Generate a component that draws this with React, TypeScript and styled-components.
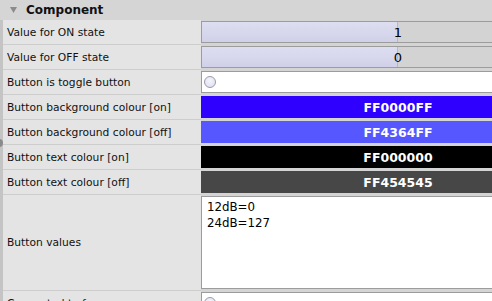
import React from "react";
import styled, { createGlobalStyle } from "styled-components";

const Global = createGlobalStyle`
  html, body { margin: 0; padding: 0; background: #d4d4d4; overflow: hidden; }
  * { box-sizing: border-box; }
`;

const Frame = styled.div`
  width: 492px;
  height: 301px;
  overflow: hidden;
  display: flex;
  flex-direction: column;
  background: #d4d4d4;
  font-family: "DejaVu Sans", "Liberation Sans", sans-serif;
`;

const Header = styled.div`
  height: 20px;
  flex: none;
  display: flex;
  align-items: center;
  gap: 9px;
  padding-left: 10px;
  background: #d5d5d5;
  font-weight: bold;
  font-size: 12px;
  color: #111;
`;

const Body = styled.div`
  display: flex;
  flex: 1;
  min-height: 0;
`;

const Strip = styled.div`
  width: 3px;
  flex: none;
  background: #c4c4c4;
  position: relative;
`;

const Grip = styled.div`
  position: absolute;
  left: -2px;
  top: 119px;
  width: 5px;
  height: 8px;
  border-radius: 0 4px 4px 0;
  background: #8a8a8a;
`;

const List = styled.div`
  display: flex;
  flex-direction: column;
  width: 592px;
  flex: none;
`;

const Row = styled.div<{ $h: number }>`
  display: grid;
  grid-template-columns: 198px 394px;
  height: ${(p) => p.$h}px;
  flex: none;
`;

const Label = styled.div`
  background: #e4e4e4;
  border-bottom: 1px solid #cdcdcd;
  display: flex;
  align-items: center;
  padding-left: 4px;
  font-size: 10.7px;
  color: #111;
  white-space: nowrap;
  overflow: hidden;
`;

const Cell = styled.div`
  background: #d4d4d4;
  padding: 1px 0 2px 0;
  display: flex;
  flex-direction: column;
`;

const SliderBox = styled.div`
  flex: 1;
  position: relative;
  border: 1px solid #9c9c9c;
  background: #d3d3d3;
  display: flex;
  align-items: center;
  justify-content: center;
  font-size: 13px;
  color: #000;
`;

const SliderFill = styled.div`
  position: absolute;
  left: 0;
  top: 0;
  bottom: 0;
  background: linear-gradient(#dedef2, #d0d0e8);
  border-right: 1px solid #b8b8cc;
`;

const SliderText = styled.span`
  position: relative;
`;

const ToggleBox = styled.div`
  flex: 1;
  border: 1px solid #9c9c9c;
  background: #fff;
  display: flex;
  align-items: center;
  padding-left: 2px;
`;

const Radio = styled.div`
  width: 12px;
  height: 12px;
  border-radius: 50%;
  border: 1px solid #9a9aa6;
  background: radial-gradient(circle at 50% 35%, #f4f4fc, #dcdcf0);
`;

const ColourBox = styled.div<{ $c: string }>`
  flex: 1;
  background: ${(p) => p.$c};
  display: flex;
  align-items: center;
  justify-content: center;
  color: #fff;
  font-weight: bold;
  font-size: 12.5px;
`;

const TextArea = styled.div`
  flex: 1;
  border: 1px solid #9c9c9c;
  background: #fff;
  padding: 2px 5px;
  font-size: 11.8px;
  line-height: 16px;
  color: #000;
  white-space: pre;
`;

const Triangle = () => (
  <svg width="7" height="6" viewBox="0 0 7 6">
    <path d="M0 0 L7 0 L3.5 6 Z" fill="#8c8c8c" />
  </svg>
);

const colours = [
  { label: "Button background colour [on]", c: "#3000ff", t: "FF0000FF" },
  { label: "Button background colour [off]", c: "#5757ff", t: "FF4364FF" },
  { label: "Button text colour [on]", c: "#000000", t: "FF000000" },
  { label: "Button text colour [off]", c: "#474747", t: "FF454545" },
];

export default function App() {
  return (
    <>
      <Global />
      <Frame>
        <Header>
          <Triangle />
          <span>Component</span>
        </Header>
        <Body>
          <Strip>
            <Grip />
          </Strip>
          <List>
            {[
              { label: "Value for ON state", v: "1" },
              { label: "Value for OFF state", v: "0" },
            ].map((r) => (
              <Row $h={25} key={r.label}>
                <Label>{r.label}</Label>
                <Cell>
                  <SliderBox>
                    <SliderFill style={{ width: "50%" }} />
                    <SliderText>{r.v}</SliderText>
                  </SliderBox>
                </Cell>
              </Row>
            ))}
            <Row $h={25}>
              <Label>Button is toggle button</Label>
              <Cell>
                <ToggleBox>
                  <Radio />
                </ToggleBox>
              </Cell>
            </Row>
            {colours.map((r) => (
              <Row $h={25} key={r.label}>
                <Label>{r.label}</Label>
                <Cell>
                  <ColourBox $c={r.c}>{r.t}</ColourBox>
                </Cell>
              </Row>
            ))}
            <Row $h={96}>
              <Label>Button values</Label>
              <Cell>
                <TextArea>{"12dB=0\n24dB=127"}</TextArea>
              </Cell>
            </Row>
            <Row $h={25}>
              <Label>Connected to frame</Label>
              <Cell>
                <ToggleBox>
                  <Radio />
                </ToggleBox>
              </Cell>
            </Row>
          </List>
        </Body>
      </Frame>
    </>
  );
}
